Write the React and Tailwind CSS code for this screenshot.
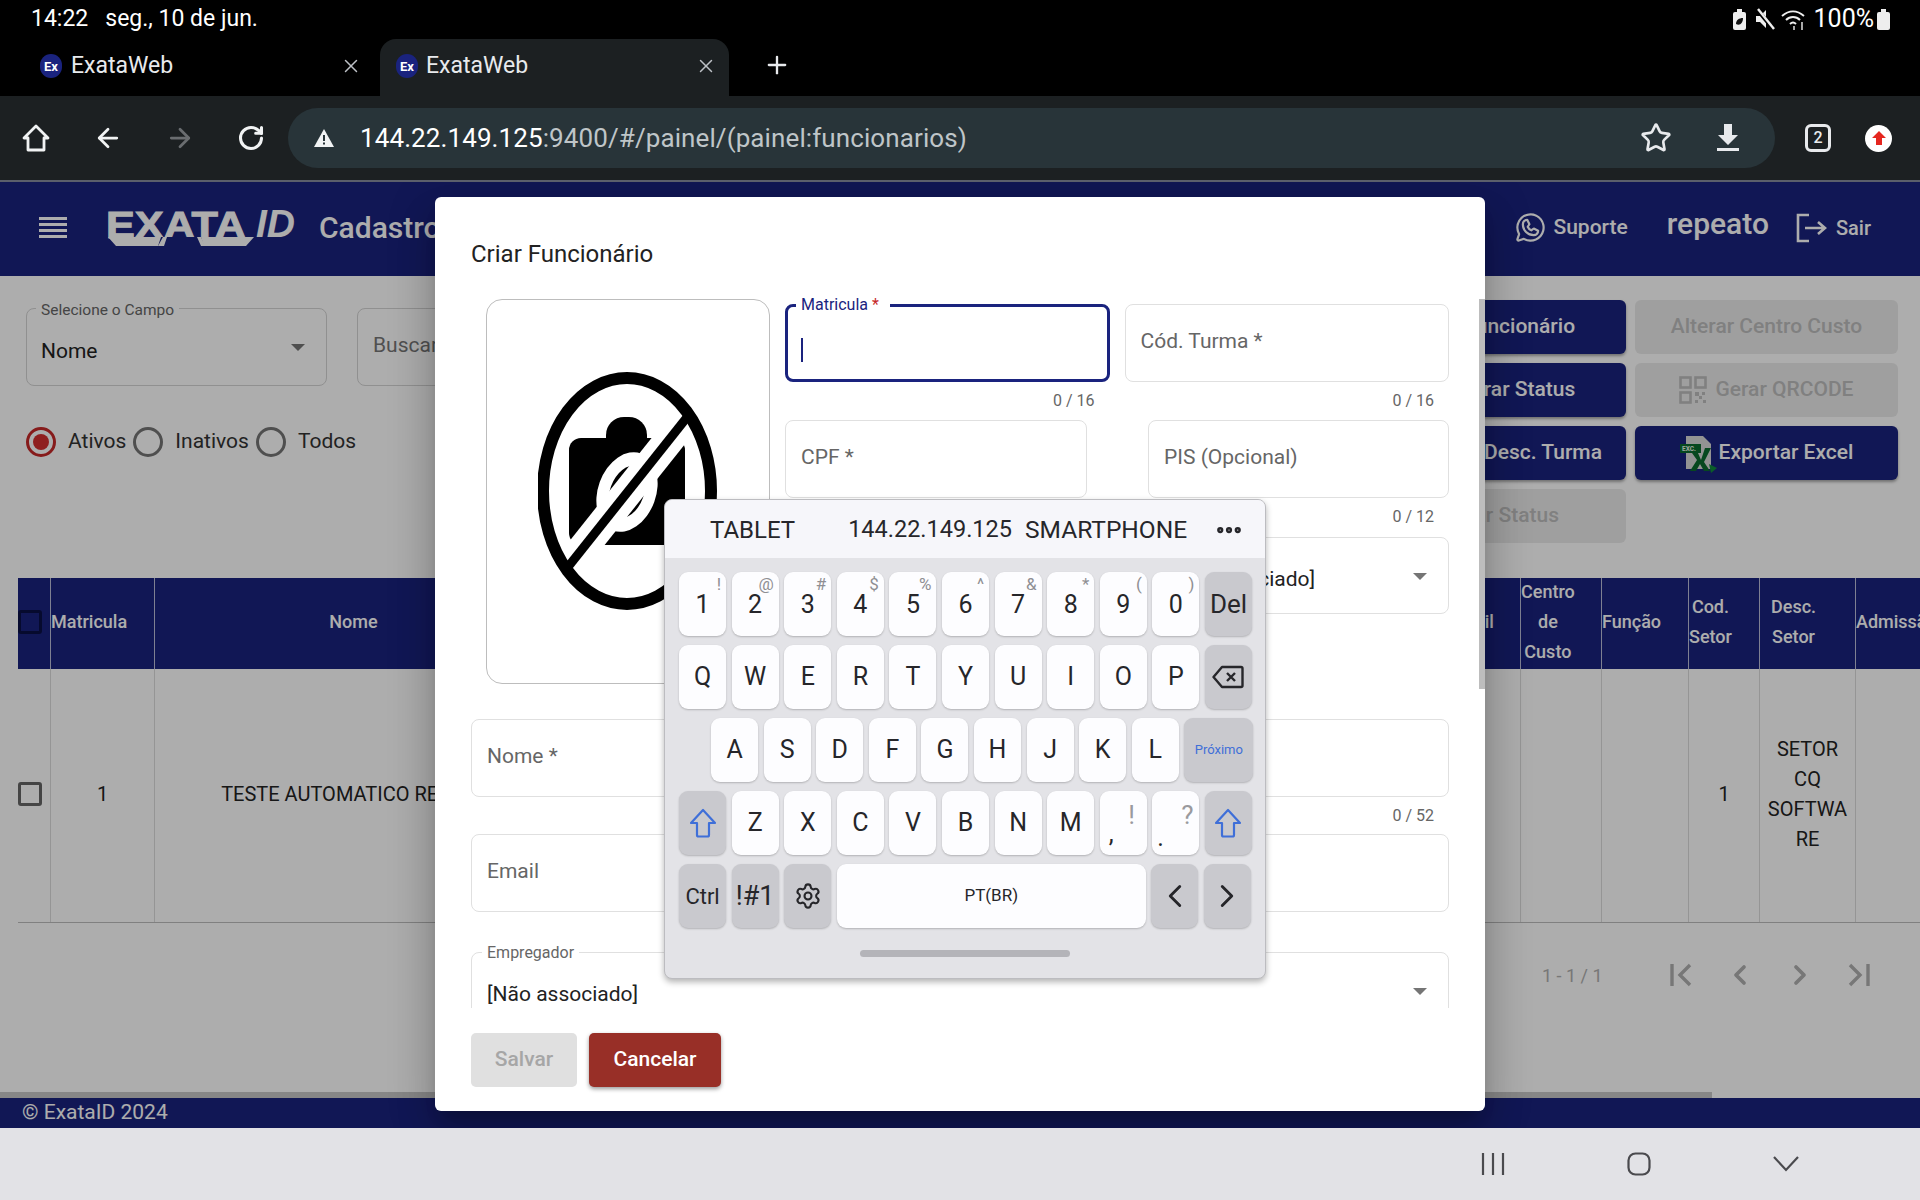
import { ChevronLeft, ChevronRight, Settings, X, Plus, ArrowLeft, ArrowRight, RotateCw, Star, MoreHorizontal } from "lucide-react";
import { PiWhatsappLogo } from "react-icons/pi";

const columns = [
  { w: "w-[32px]", head: "", cell: "" },
  { w: "w-[104px]", head: "Matricula", cell: "1" },
  { w: "w-[398px]", head: "Nome", cell: "TESTE AUTOMATICO REPEAT", center: true },
  { w: "w-[148px]", head: "Cód. Turma", cell: "" },
  { w: "w-[200px]", head: "Desc. Turma", cell: "" },
  { w: "w-[200px]", head: "CPF", cell: "" },
  { w: "w-[150px]", head: "PIS", cell: "" },
  { w: "w-[172px]", head: "Empregador", cell: "" },
  { w: "w-[98px]", head: "Email", cell: "", center: true },
  { w: "w-[81px]", head: "Centro de Custo", cell: "" },
  { w: "w-[87px]", head: "Função", cell: "" },
  { w: "w-[71px]", head: "Cod. Setor", cell: "1" },
  { w: "w-[96px]", head: "Desc. Setor", cell: "SETOR CQ SOFTWARE", pad: "pl-[11px]" },
  { w: "w-[90px]", head: "Admissão", cell: "" },
];

const Favicon = () => (
  <div className="w-[22px] h-[24px] rounded-full bg-[#1a237e] flex items-center justify-center text-white text-[13px] font-bold leading-none shrink-0">
    Ex
  </div>
);

const StatusBar = () => (
  <div className="h-[38px] flex items-center pl-[31px] pr-[30px] text-white text-[23px]">
    <span>14:22</span>
    <span className="ml-[17px]">seg., 10 de jun.</span>
    <div className="ml-auto flex items-center">
      <svg width="13" height="21" viewBox="0 0 13 21">
        <rect x="0" y="3" width="13" height="18" rx="2" fill="#eee" />
        <rect x="4" y="0" width="5" height="4" fill="#eee" />
        <path d="M3 15c0-4 3-6 7-6 0 5-3 8-7 6z" fill="#111" />
      </svg>
      <svg className="ml-[9px]" width="20" height="22" viewBox="0 0 20 22">
        <path d="M1 8h4l6-6v18l-6-6H1z" fill="#eee" />
        <path d="M1 0l18 22" stroke="#000" strokeWidth="4" />
        <path d="M3 1l16 20" stroke="#eee" strokeWidth="2.4" />
      </svg>
      <svg className="ml-[6px]" width="26" height="22" viewBox="0 0 26 22" fill="none" stroke="#eee" strokeWidth="2">
        <path d="M1 8c7-6 15-6 22 0" />
        <path d="M5 12c4-4 10-4 14 0" />
        <path d="M9 16c2-2 4-2 6 0" />
        <path d="M13 18v4M21 14v8" strokeWidth="1.4" />
      </svg>
      <span className="ml-[7px] text-[25px]">100%</span>
      <svg className="ml-[3px]" width="13" height="21" viewBox="0 0 13 21">
        <rect x="0" y="3" width="13" height="18" rx="2" fill="#eee" />
        <rect x="4" y="0" width="5" height="4" fill="#eee" />
      </svg>
    </div>
  </div>
);

const TabStrip = () => (
  <div className="h-[58px] flex items-end">
    <div className="w-[380px] h-[57px] flex items-center pl-[40px] pr-[18px] pb-[3px]">
      <Favicon />
      <span className="ml-[9px] text-[23px] text-[#e8eaed]">ExataWeb</span>
      <X className="ml-auto text-[#bdc1c6]" size={22} strokeWidth={1.6} />
    </div>
    <div className="w-[349px] h-[57px] rounded-t-[16px] bg-[#1c2022] flex items-center pl-[16px] pr-[12px] pb-[3px]">
      <Favicon />
      <span className="ml-[8px] text-[23px] text-[#e8eaed]">ExataWeb</span>
      <X className="ml-auto text-[#bdc1c6]" size={22} strokeWidth={1.6} />
    </div>
    <Plus className="ml-[34px] mb-[17px] text-[#e8eaed]" size={28} strokeWidth={2} />
  </div>
);

const Toolbar = () => (
  <div className="h-[84px] bg-[#1c2022] border-b-[2px] border-[#5b5f6b] flex items-center box-content">
    <svg className="ml-[21px]" width="30" height="30" viewBox="0 0 30 30" fill="none" stroke="#f1f3f4" strokeWidth="2.8">
      <path d="M15 3L3 15h4v12h16V15h4z" strokeLinejoin="round" />
    </svg>
    <ArrowLeft className="ml-[42px] text-[#f1f3f4]" size={30} strokeWidth={2.2} />
    <ArrowRight className="ml-[42px] text-[#6a6d70]" size={30} strokeWidth={2.2} />
    <RotateCw className="ml-[42px] text-[#f1f3f4]" size={28} strokeWidth={2.6} />
    <div className="ml-[23px] w-[1487px] h-[60px] rounded-full bg-[#283439] flex items-center pl-[25px]">
      <svg width="22" height="20" viewBox="0 0 22 20">
        <path d="M11 1l10 18H1z" fill="#f1f3f4" />
        <path d="M10 7h2v6h-2zM10 14.5h2v2h-2z" fill="#283439" />
      </svg>
      <span className="ml-[25px] mt-[1px] text-[26px] text-white tracking-[0.1px]">
        144.22.149.125<span className="text-[#bfc5c8]">:9400/#/painel/(painel:funcionarios)</span>
      </span>
      <Star className="ml-auto text-[#e8eaed]" size={32} strokeWidth={2} />
      <svg className="ml-[44px] mr-[35px]" width="24" height="28" viewBox="0 0 24 28" fill="#e8eaed">
        <path d="M8 0h8v11h6L12 21 2 11h6z" />
        <rect x="1" y="24" width="22" height="3" />
      </svg>
    </div>
    <div className="ml-[30px] w-[26px] h-[28px] rounded-[6px] border-[3px] border-[#e8eaed] flex items-center justify-center text-[#e8eaed] text-[16px] font-medium">
      2
    </div>
    <div className="ml-[34px] w-[27px] h-[27px] rounded-full bg-white flex items-center justify-center">
      <svg width="16" height="16" viewBox="0 0 16 16" fill="#e5261f">
        <path d="M8 1l7 7h-4v7H5V8H1z" />
      </svg>
    </div>
  </div>
);

const Logo = () => (
  <div className="relative ml-[39px] w-[190px] h-[36px]">
    <span
      className="absolute left-0 -top-[6px] text-[36px] leading-[44px] font-bold text-white origin-left scale-x-[1.2] [-webkit-text-stroke:1px_white]"
      style={{ fontFamily: "Liberation Sans" }}
    >
      EXATA
    </span>
    <span className="absolute left-[150px] -top-[8px] text-[39px] leading-[44px] italic font-bold text-white" style={{ fontFamily: "Liberation Sans" }}>
      ID
    </span>
    <svg className="absolute left-[2px] top-[27px]" width="146" height="9" viewBox="0 0 146 9" fill="#fff">
      <path d="M0 0h56l-3 9H8zM90 0h56l-8 9H93z" />
      <path d="M53 0h40l3 9H50z" fill="#1a237e" />
      <path d="M50 9l5-9h4l-3 9zM93 9l-4-9h4l4 9z" />
    </svg>
  </div>
);

const Header = () => (
  <div className="h-[94px] bg-[#1a237e] flex items-center text-white shrink-0 pb-[3px]">
    <svg className="ml-[39px]" width="28" height="22" viewBox="0 0 28 22" fill="#fff">
      <rect y="0" width="28" height="3" />
      <rect y="6" width="28" height="3" />
      <rect y="12" width="28" height="3" />
      <rect y="18" width="28" height="3" />
    </svg>
    <Logo />
    <span className="ml-[23px] text-[30px] font-medium">Cadastro de Funcionários</span>
    <div className="ml-auto flex items-center pr-[49px]">
      <PiWhatsappLogo size={35} />
      <span className="ml-[5px] text-[21px] font-medium">Suporte</span>
      <span className="ml-[39px] text-[30px] font-medium -mt-[8px]">repeato</span>
      <svg className="ml-[27px]" width="32" height="30" viewBox="0 0 32 30" fill="none" stroke="#fff" strokeWidth="2.6">
        <path d="M13 2H2v26h11" />
        <path d="M9 15h20M22 9l7 6-7 6" />
      </svg>
      <span className="ml-[8px] text-[20px] font-medium">Sair</span>
    </div>
  </div>
);

const Radio = ({ label, checked }) => (
  <div className="flex items-center">
    <div className={checked ? "w-[30px] h-[30px] rounded-full border-[3px] border-[#c62828] flex items-center justify-center" : "w-[30px] h-[30px] rounded-full border-[3px] border-[#757575]"}>
      {checked && <div className="w-[16px] h-[16px] rounded-full bg-[#d32f2f]" />}
    </div>
    <span className="ml-[12px] text-[21px] text-[#333]">{label}</span>
  </div>
);

const ActionButton = ({ children, disabled }) => (
  <div
    className={
      disabled
        ? "h-[54px] rounded-[6px] bg-[#ebebeb] text-[#bdbdbd] text-[21px] font-medium flex items-center justify-center"
        : "h-[54px] rounded-[6px] bg-[#1a237e] text-white text-[21px] font-medium flex items-center justify-center shadow-[0_2px_3px_rgba(0,0,0,0.35)]"
    }
  >
    {children}
  </div>
);

const Filters = () => (
  <div className="h-[302px] flex shrink-0">
    <div className="pl-[26px] pt-[32px]">
      <div className="flex">
        <div className="relative w-[301px] h-[78px] rounded-[8px] border border-[#d4d4d4] flex">
          <span className="absolute left-[9px] -top-[9px] px-[5px] bg-white text-[15.5px] leading-[20px] text-[#666]">Selecione o Campo</span>
          <span className="ml-[14px] mt-[28px] text-[21px] leading-[28px] text-[#222]">Nome</span>
          <div className="absolute right-[21px] top-[35px] border-x-[7px] border-x-transparent border-t-[7px] border-t-[#757575]" />
        </div>
        <div className="ml-[30px] w-[500px] h-[78px] rounded-[8px] border border-[#d4d4d4] pl-[15px] pt-[21px] text-[21px] text-[#777]">Buscar</div>
      </div>
      <div className="mt-[40px] flex items-center gap-[7px]">
        <Radio label="Ativos" checked />
        <Radio label="Inativos" />
        <Radio label="Todos" />
      </div>
    </div>
    <div className="ml-auto mr-[22px] mt-[24px] w-[535px] h-[243px] grid grid-cols-2 gap-[9px]">
      <ActionButton>Criar Funcionário</ActionButton>
      <ActionButton disabled>Alterar Centro Custo</ActionButton>
      <ActionButton>Recuperar Status</ActionButton>
      <ActionButton disabled>
        <svg className="mr-[8px]" width="28" height="28" viewBox="0 0 28 28" fill="none" stroke="#bdbdbd" strokeWidth="2.6">
          <rect x="1.5" y="1.5" width="10" height="10" />
          <rect x="16.5" y="1.5" width="10" height="10" />
          <rect x="1.5" y="16.5" width="10" height="10" />
          <path d="M16 16h4v4h-4zM23 16h3v3h-3zM20 20h3v3h-3zM16 24h3v3h-3zM24 24h3v3h-3z" fill="#bdbdbd" stroke="none" />
        </svg>
        Gerar QRCODE
      </ActionButton>
      <ActionButton>Cadastrar Desc. Turma</ActionButton>
      <ActionButton>
        <svg className="mr-[1px] mt-[2px]" width="38" height="38" viewBox="0 0 38 38">
          <path d="M6 1h17l8 8v25H6z" fill="#d9d9d9" />
          <rect x="0" y="9" width="21" height="9" fill="#0b6b2e" />
          <text x="2" y="16" fontSize="6.5" fontWeight="700" fill="#e8f5e9">EXC.</text>
          <path d="M12 18h6l3 7 4-12h6l-7 14 6 9h-6l-4-7-4 7h-6l7-11z" fill="#0b6b2e" />
          <path d="M29 29l8 4-6 5z" fill="#0f8a3c" />
        </svg>
        Exportar Excel
      </ActionButton>
      <ActionButton disabled>Alterar Status</ActionButton>
    </div>
  </div>
);

const Table = () => (
  <div className="ml-[18px] overflow-hidden shrink-0">
    <div className="flex h-[91px] bg-[#1a237e] w-[2300px]">
      {columns.map((col, i) => (
        <div
          key={i}
          className={`${col.w} ${col.center ? "justify-center" : "justify-start"} ${col.pad || ""} shrink-0 border-l border-white/70 first:border-l-0 flex items-center text-center text-white text-[18px] font-medium leading-[30px] pb-[3px]`}
        >
          {i === 0 ? <div className="w-[24px] h-[24px] rounded-[3px] border-[3px] border-[#0a0f45] ml-0" /> : <div className={col.center ? "" : "w-min"}>{col.head}</div>}
        </div>
      ))}
    </div>
    <div className="flex h-[253px] border-b border-[#bdbdbd] w-[2300px] box-content">
      {columns.map((col, i) => (
        <div
          key={i}
          className={`${col.w} shrink-0 border-l border-[#dcdcdc] first:border-l-0 flex items-center justify-center text-center text-[#222] text-[20px] leading-[30px] px-[4px] pb-[4px] wrap-anywhere`}
        >
          {i === 0 ? <div className="w-[24px] h-[24px] rounded-[3px] border-[3px] border-[#666] -ml-[8px]" /> : col.cell}
        </div>
      ))}
    </div>
  </div>
);

const Pager = () => (
  <div className="flex items-center pt-[36px] pl-[1542px] text-[#b0b0b0]">
    <span className="text-[18px] w-[124px]">1 - 1 / 1</span>
    <svg width="30" height="26" viewBox="0 0 30 26" fill="none" stroke="#b0b0b0" strokeWidth="3.4">
      <path d="M6 2v22M24 3L14 13l10 10" />
    </svg>
    <ChevronLeft className="ml-[28px]" size={32} strokeWidth={2.8} />
    <ChevronRight className="ml-[28px]" size={32} strokeWidth={2.8} />
    <svg className="ml-[28px]" width="30" height="26" viewBox="0 0 30 26" fill="none" stroke="#b0b0b0" strokeWidth="3.4">
      <path d="M24 2v22M6 3l10 10L6 23" />
    </svg>
  </div>
);

const Field = ({ label, counter, className, focused }) => (
  <div className={className}>
    <div
      className={
        focused
          ? "relative h-[78px] rounded-[8px] border-[3px] border-[#1a237e]"
          : "relative h-[78px] rounded-[8px] border border-[#e0e0e0] pl-[15px] pb-[2px] flex items-center text-[21px] text-[#666]"
      }
    >
      {focused ? (
        <>
          <span className="absolute left-[8px] -top-[12px] px-[5px] pr-[11px] bg-white text-[16px] leading-[20px] text-[#1a237e]">
            {label} <span className="text-[#c62828]">*</span>
          </span>
          <div className="absolute left-[13px] top-[31px] w-[2px] h-[24px] bg-[#1a237e]" />
        </>
      ) : (
        label
      )}
    </div>
    <div className="h-[38px] pr-[15px] text-right text-[16px] leading-[38px] text-[#666]">{counter}</div>
  </div>
);

const SelectField = ({ label, value, className }) => (
  <div className={`relative h-[77px] rounded-[8px] border border-[#e0e0e0] ${className}`}>
    <span className="absolute left-[10px] -top-[10px] px-[5px] bg-white text-[16px] leading-[20px] text-[#666]">{label}</span>
    <span className="absolute left-[15px] top-[27px] text-[21px] leading-[28px] text-[#222]">{value}</span>
    <div className="absolute right-[21px] top-[35px] border-x-[7px] border-x-transparent border-t-[7px] border-t-[#757575]" />
  </div>
);

const NoCamera = () => (
  <svg width="180" height="240" viewBox="0 0 180 240">
    <rect x="31" y="66" width="116" height="107" rx="12" fill="#000" />
    <rect x="68" y="45" width="41" height="50" rx="18" fill="#000" />
    <ellipse cx="89" cy="120" rx="29" ry="41" fill="#fff" transform="rotate(20 89 120)" />
    <ellipse cx="89" cy="120" rx="17" ry="27" fill="#000" transform="rotate(20 89 120)" />
    <path d="M22 205L155 38" stroke="#fff" strokeWidth="30" />
    <ellipse cx="89" cy="119" rx="84" ry="113" fill="none" stroke="#000" strokeWidth="12" />
    <path d="M26 200L150 44" stroke="#000" strokeWidth="9" />
  </svg>
);

const Modal = () => (
  <div className="absolute left-[435px] top-[15px] w-[1050px] h-[914px] bg-white rounded-[6px] flex flex-col shadow-[0_11px_15px_-7px_rgba(0,0,0,0.2),0_24px_38px_3px_rgba(0,0,0,0.14),0_9px_46px_8px_rgba(0,0,0,0.12)]">
    <div className="pl-[36px] pt-[42px] h-[92px] text-[24px] leading-[30px] text-[#222]">Criar Funcionário</div>
    <div className="h-[719px] overflow-hidden px-[36px] pt-[10px] shrink-0">
      <div className="flex">
        <div className="ml-[15px] w-[284px] h-[385px] rounded-[16px] border border-[#bdbdbd] flex items-center justify-center shrink-0">
          <NoCamera />
        </div>
        <div className="ml-[15px] flex-1 pt-[5px]">
          <div className="flex gap-[15px]">
            <Field label="Matricula" focused counter="0 / 16" className="flex-1" />
            <Field label="Cód. Turma *" counter="0 / 16" className="flex-1" />
          </div>
          <div className="flex gap-[61px]">
            <Field label="CPF *" counter="" className="w-[302px]" />
            <Field label="PIS (Opcional)" counter="0 / 12" className="flex-1" />
          </div>
          <div className="flex gap-[61px] mt-[1px]">
            <div className="w-[302px] h-[77px] rounded-[8px] border border-[#e0e0e0]" />
            <SelectField label="Setor" value="[Não associado]" className="flex-1" />
          </div>
        </div>
      </div>
      <Field label="Nome *" counter="0 / 52" className="mt-[35px]" />
      <Field label="Email" counter="" className="-mt-[1px]" />
      <SelectField label="Empregador" value="[Não associado]" className="mt-[2px]" />
    </div>
    <div className="pl-[36px] pt-[25px] flex gap-[12px]">
      <div className="w-[106px] h-[54px] rounded-[5px] bg-[#e0e0e0] text-[#a6a6a6] text-[21px] font-medium flex items-center justify-center">Salvar</div>
      <div className="w-[132px] h-[54px] rounded-[5px] bg-[#982f27] text-white text-[21px] font-medium flex items-center justify-center shadow-[0_2px_4px_rgba(0,0,0,0.4)]">Cancelar</div>
    </div>
    <div className="absolute right-0 top-[102px] w-[6px] h-[390px] bg-[#bdbdbd]" />
  </div>
);

const Key = ({ label, sub, gray, className = "w-[47.1px]", textClass = "text-[25px]" }) => (
  <div
    className={`relative h-[64px] rounded-[9px] flex items-center justify-center text-[#26262a] shadow-[0_1px_2px_rgba(0,0,0,0.22)] shrink-0 ${gray ? "bg-[#c9c9ce]" : "bg-[#fdfdff]"} ${className} ${textClass}`}
  >
    {label}
    {sub && <span className="absolute right-[5px] top-[2px] text-[17px] leading-[20px] text-[#8f8f93]">{sub}</span>}
  </div>
);

const ShiftIcon = () => (
  <svg width="28" height="30" viewBox="0 0 28 30" fill="none" stroke="#3f6fd8" strokeWidth="2.2" strokeLinejoin="round">
    <path d="M14 2L2 15h6v12a1.5 1.5 0 0 0 1.5 1.5h9A1.5 1.5 0 0 0 20 27V15h6z" />
  </svg>
);

const row1 = [["1", "!"], ["2", "@"], ["3", "#"], ["4", "$"], ["5", "%"], ["6", "^"], ["7", "&"], ["8", "*"], ["9", "("], ["0", ")"]];

const Keyboard = () => (
  <div className="absolute left-[664px] top-[317px] w-[602px] h-[480px] rounded-[8px] bg-[#e3e3e7] border border-[#bcbcc0] shadow-[0_3px_6px_rgba(0,0,0,0.3)] overflow-hidden">
    <div className="relative h-[58px] bg-[#f6f6fa] text-[24px] text-[#26262a] flex items-center pt-[2px]">
      <span className="ml-[45px]">TABLET</span>
      <span className="ml-[53px] text-[23.5px]">144.22.149.125</span>
      <span className="ml-[13px] text-[24.5px]">SMARTPHONE</span>
      <MoreHorizontal className="ml-[27px] text-[#26262a]" size={30} strokeWidth={3} />
    </div>
    <div className="pl-[14px] pt-[14px] flex flex-col gap-[9px]">
      <div className="flex gap-[5.5px]">
        {row1.map(([n, s]) => (
          <Key key={n} label={<span className="mt-[2px]">{n}</span>} sub={s} />
        ))}
        <Key label="Del" gray textClass="text-[26px]" />
      </div>
      <div className="flex gap-[5.5px]">
        {"QWERTYUIOP".split("").map((c) => (
          <Key key={c} label={c} />
        ))}
        <Key
          gray
          label={
            <svg width="32" height="24" viewBox="0 0 32 24" fill="none" stroke="#26262a" strokeWidth="2.4" strokeLinejoin="round">
              <path d="M10 2h19a1.5 1.5 0 0 1 1.5 1.5v17a1.5 1.5 0 0 1-1.5 1.5H10L1.5 12z" />
              <path d="M15 8l8 8M23 8l-8 8" />
            </svg>
          }
        />
      </div>
      <div className="flex gap-[5.5px] pl-[32px]">
        {"ASDFGHJKL".split("").map((c) => (
          <Key key={c} label={c} />
        ))}
        <Key label="Próximo" gray className="w-[69px]" textClass="text-[13px] text-[#3f6fd8]!" />
      </div>
      <div className="flex gap-[5.5px]">
        <Key gray label={<ShiftIcon />} />
        {"ZXCVBNM".split("").map((c) => (
          <Key key={c} label={c} />
        ))}
        <Key
          label={
            <>
              <span className="absolute left-[9px] top-[24px]">,</span>
              <span className="absolute right-[12px] top-[10px] text-[#9a9a9e] text-[26px] leading-[28px]">!</span>
            </>
          }
        />
        <Key
          label={
            <>
              <span className="absolute left-[5px] top-[28px]">.</span>
              <span className="absolute right-[6px] top-[10px] text-[#9a9a9e] text-[26px] leading-[28px]">?</span>
            </>
          }
        />
        <Key gray label={<ShiftIcon />} />
      </div>
      <div className="flex gap-[5.5px]">
        <Key gray label="Ctrl" textClass="text-[22px]" />
        <Key gray label="!#1" textClass="text-[27px]" />
        <Key gray label={<Settings size={28} strokeWidth={1.8} />} />
        <Key label="PT(BR)" className="w-[309px]" textClass="text-[17px]" />
        <Key gray label={<ChevronLeft size={38} strokeWidth={1.8} />} />
        <Key gray label={<ChevronRight size={38} strokeWidth={1.8} />} />
      </div>
    </div>
    <div className="mx-auto mt-[22px] w-[210px] h-[7px] rounded-full bg-[#b4b4b9]" />
  </div>
);

const NavBar = () => (
  <div className="h-[72px] bg-[#e2e2e6] flex items-center shrink-0 pl-[1481px]">
    <svg width="24" height="24" viewBox="0 0 24 24" fill="none" stroke="#4a4a4e" strokeWidth="2.2">
      <path d="M2 1v22M12 1v22M22 1v22" />
    </svg>
    <svg className="ml-[122px]" width="24" height="24" viewBox="0 0 24 24" fill="none" stroke="#4a4a4e" strokeWidth="2.2">
      <rect x="1.5" y="1.5" width="21" height="21" rx="7" />
    </svg>
    <svg className="ml-[122px]" width="26" height="16" viewBox="0 0 26 16" fill="none" stroke="#4a4a4e" strokeWidth="2.2">
      <path d="M1 1l12 13L25 1" />
    </svg>
  </div>
);

export default function App() {
  return (
    <div className="w-[1920px] h-[1200px] bg-black flex flex-col overflow-hidden" style={{ fontFamily: "Roboto, sans-serif" }}>
      <StatusBar />
      <TabStrip />
      <Toolbar />
      <div className="relative h-[946px] bg-white flex flex-col overflow-hidden">
        <Header />
        <Filters />
        <Table />
        <Pager />
        <div className="mt-auto h-[6px] w-[1712px] bg-[#c8c8c8] shrink-0" />
        <div className="h-[30px] bg-[#1a237e] pl-[22px] text-[21px] leading-[28px] text-white shrink-0">© ExataID 2024</div>
        <div className="absolute inset-0 bg-black/32" />
        <Modal />
        <Keyboard />
      </div>
      <NavBar />
    </div>
  );
}
